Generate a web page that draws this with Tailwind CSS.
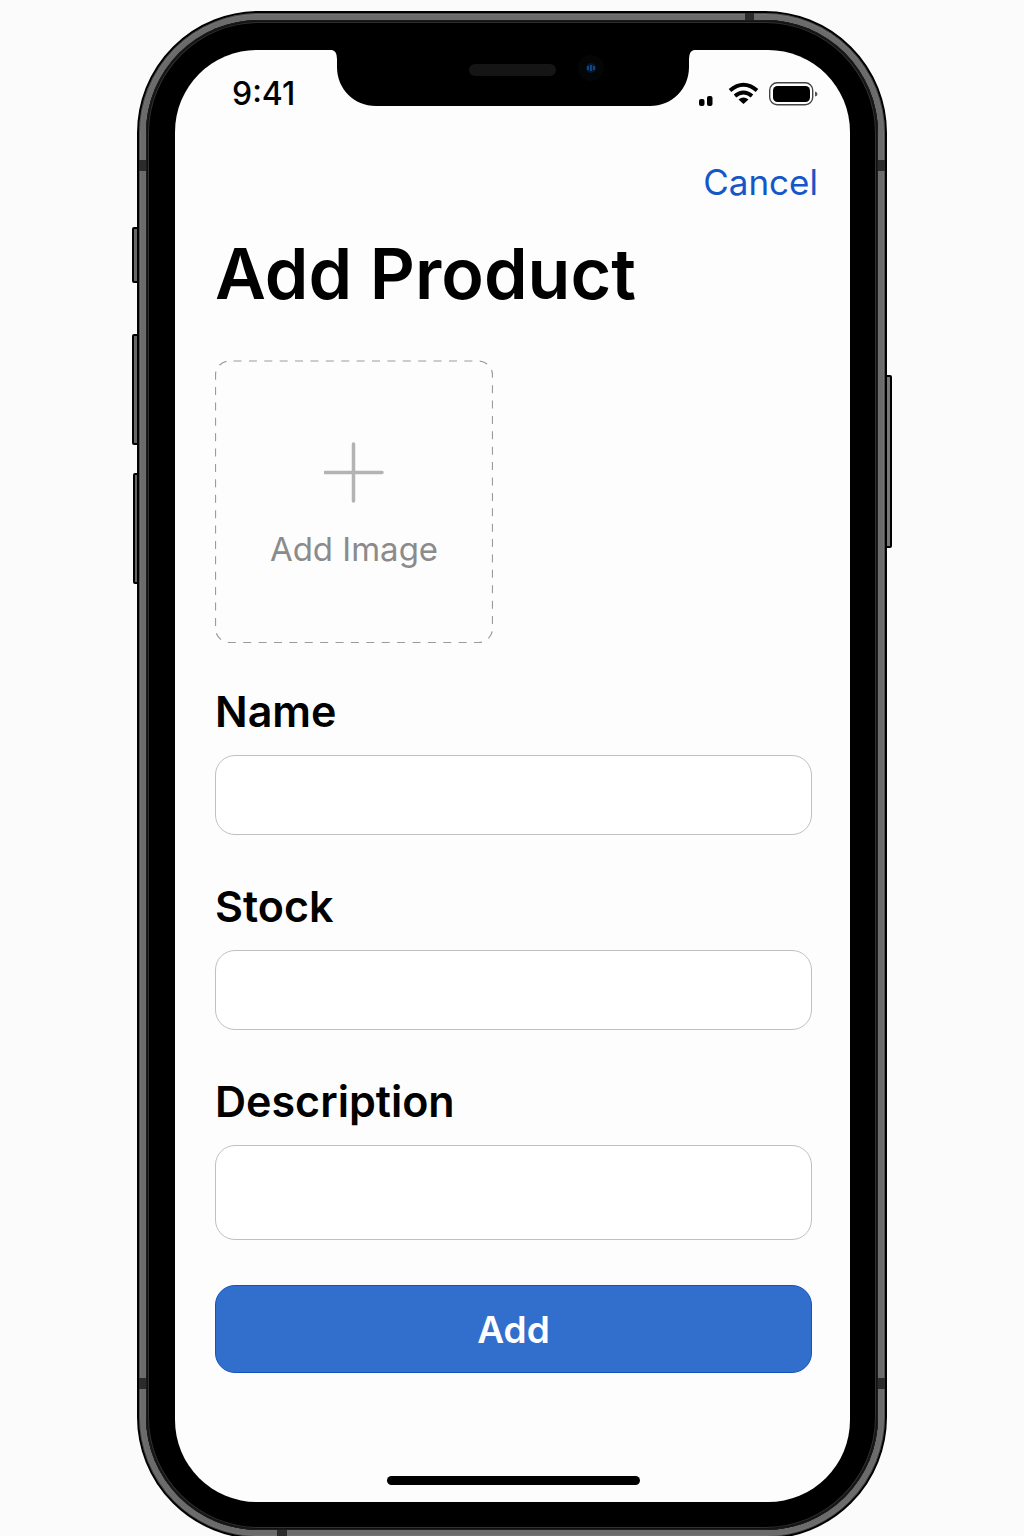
<!DOCTYPE html>
<html lang="en">
<head>
<meta charset="utf-8">
<meta name="viewport" content="width=device-width, initial-scale=1">
<title>Add Product</title>
<script src="https://cdn.jsdelivr.net/npm/@tailwindcss/browser@4"></script>
</head>
<body class="h-screen overflow-hidden bg-[#fbfbfb] font-['Inter',sans-serif] text-black">
<main class="flex justify-center pt-[11px]">
  <!-- Phone body -->
  <div class="relative w-full max-w-[750px]">
    <!-- Side keys -->
    <span class="absolute top-[216px] -left-[5px] h-14 w-2 rounded-l-xs border-2 border-black bg-[#666]"></span>
    <span class="absolute top-[323px] -left-[5px] h-[111px] w-2 rounded-l-xs border-2 border-black bg-[#666]"></span>
    <span class="absolute top-[462px] -left-1 h-[111px] w-2 rounded-l-xs border-2 border-black bg-[#666]"></span>
    <span class="absolute top-[364px] -right-[5px] h-[173px] w-2 rounded-r-xs border-2 border-black bg-[#777]"></span>

    <div class="relative rounded-[122px] border-2 border-black bg-[#6b6b6b] p-[7px] shadow-[inset_0_0_0_1px_#4c4c4c,inset_0_0_0_2px_#737373]">
      <!-- Antenna bands -->
      <span class="absolute top-0 right-[131px] h-[7px] w-[9px] bg-[#2b2b2b]"></span>
      <span class="absolute bottom-0 left-[138px] h-[7px] w-[10px] bg-[#2b2b2b]"></span>
      <span class="absolute top-[147px] left-0 h-[11px] w-[7px] bg-[#2b2b2b]"></span>
      <span class="absolute top-[147px] right-0 h-[11px] w-[7px] bg-[#2b2b2b]"></span>
      <span class="absolute top-[1365px] left-0 h-[11px] w-[7px] bg-[#2b2b2b]"></span>
      <span class="absolute top-[1365px] right-0 h-[11px] w-[7px] bg-[#2b2b2b]"></span>

      <div class="rounded-[113px] bg-black pt-[30px] pr-7 pb-[28px] pl-[29px] shadow-[inset_0_0_0_1px_#1c1c1c,inset_0_0_0_2px_#111,inset_0_0_0_3px_#303030]">
        <!-- Screen -->
        <div class="relative rounded-[82px] bg-[#fdfdfd] pr-[38px] pb-[17px] pl-10">
          <svg class="absolute top-0 left-1/2 h-14 w-[362px] -translate-x-1/2" viewBox="0 0 362 56" aria-hidden="true">
            <path d="M0 0Q5 1 5 9V17C5 39 22 56 44 56H318C340 56 357 39 357 17V9Q357 1 362 0V-1H0Z"/>
            <rect x="137" y="14" width="87" height="12" rx="6" fill="#151515"/>
            <circle cx="259" cy="18" r="13" fill="#040506"/>
            <circle cx="259" cy="18" r="5" fill="#06182c"/>
            <path d="M256 16v4M259 15v6M262 16v4" stroke="#0c478c" stroke-width="2"/>
          </svg>

          <header class="flex items-center justify-between pt-6 pl-[17px]">
            <time class="text-[32px] leading-10 font-medium">9:41</time>
            <svg class="-mr-2 h-10 w-[122px]" viewBox="698 74 122 40" role="img" aria-label="Signal, Wi-Fi and battery">
              <rect x="699" y="99" width="5.500" height="7" rx="2"/>
              <rect x="707" y="96" width="5.500" height="10" rx="2"/>
              <path d="M730 90.500Q743.500 79 757 90.500M735 96Q743.500 89 752 96" fill="none" stroke="#000" stroke-width="4"/>
              <path d="M738.500 99.500Q743.500 95.500 748.500 99.500L743.500 104Z"/>
              <rect x="769.700" y="82.700" width="43" height="22" rx="7.500" fill="#fff" stroke="#444" stroke-width="1.400"/>
              <rect x="773" y="86" width="37" height="16" rx="4.500"/>
              <path d="M815 91.500Q817.500 92 817.500 94T815 96.500Z" fill="#555"/>
            </svg>
          </header>

          <nav class="-mr-1.5 mt-11 flex justify-end">
            <a href="#" class="text-[35px] leading-12 font-normal text-[#1457c8]">Cancel</a>
          </nav>

          <form>
            <h1 class="mt-6 text-[70px] leading-[88px] font-semibold whitespace-nowrap">Add Product</h1>

            <button type="button" class="relative mt-[42px] flex h-[283px] w-[278px] flex-col items-center justify-center gap-6 pt-2.5 text-[#8b8b8b]">
              <svg class="absolute inset-0 size-full" viewBox="0 0 278 283" fill="none" aria-hidden="true">
                <rect x="0.500" y="1" width="277" height="281.500" rx="14" stroke="#9b9b9b" stroke-width="1.200" stroke-dasharray="8 7.390" stroke-dashoffset="-4"/>
              </svg>
              <svg class="size-[61px]" viewBox="0 0 61 61" fill="none" stroke="#b3b3b3" stroke-width="3.500" stroke-linecap="round" aria-hidden="true">
                <path d="M29.500 2V59M1 30.500H58"/>
              </svg>
              <span class="text-[33px] leading-[44px] font-normal">Add Image</span>
            </button>

            <label for="name" class="mt-10 block text-[43px] leading-14 font-semibold">Name</label>
            <input id="name" type="text" class="mt-4 block h-20 w-full rounded-[20px] border border-[#c0c0c0] bg-white px-6 text-[33px]">

            <label for="stock" class="mt-[43px] block text-[43px] leading-14 font-semibold">Stock</label>
            <input id="stock" type="text" inputmode="numeric" class="mt-4 block h-20 w-full rounded-[20px] border border-[#c0c0c0] bg-white px-6 text-[33px]">

            <label for="description" class="mt-[43px] block text-[43px] leading-14 font-semibold">Description</label>
            <input id="description" type="text" class="mt-4 block h-[95px] w-full rounded-[20px] border border-[#c0c0c0] bg-white px-6 text-[33px]">

            <button type="submit" class="mt-[45px] block h-[88px] w-full rounded-[20px] border border-[#1353c0] bg-[#326fcd] pt-0.5 text-[37px] font-semibold text-white">Add</button>
          </form>

          <div class="mx-auto mt-[103px] h-[9px] w-[253px] rounded-full bg-black"></div>
        </div>
      </div>
    </div>
  </div>
</main>
</body>
</html>
